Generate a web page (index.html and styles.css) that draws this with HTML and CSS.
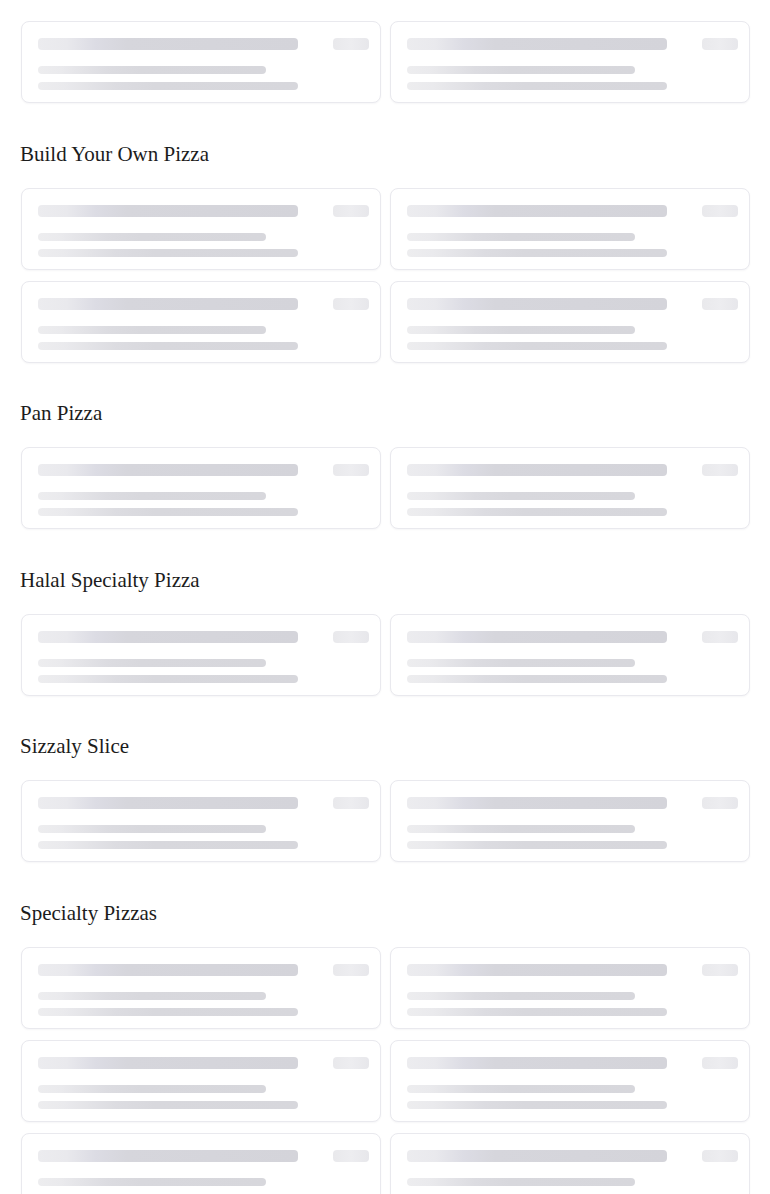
FILE: index.html
```html
<!DOCTYPE html>
<html lang="en">
<head>
<meta charset="utf-8">
<title>Menu</title>
<link rel="stylesheet" href="styles.css">
</head>
<body>
<main class="menu">
  <section class="section section-first">
    <div class="grid">
      <div class="card"><div class="col"><div class="bar title"></div><div class="bar line short"></div><div class="bar line"></div></div><div class="bar price"></div></div>
      <div class="card"><div class="col"><div class="bar title"></div><div class="bar line short"></div><div class="bar line"></div></div><div class="bar price"></div></div>
    </div>
  </section>

  <section class="section">
    <h2 class="heading">Build Your Own Pizza</h2>
    <div class="grid">
      <div class="card"><div class="col"><div class="bar title"></div><div class="bar line short"></div><div class="bar line"></div></div><div class="bar price"></div></div>
      <div class="card"><div class="col"><div class="bar title"></div><div class="bar line short"></div><div class="bar line"></div></div><div class="bar price"></div></div>
      <div class="card"><div class="col"><div class="bar title"></div><div class="bar line short"></div><div class="bar line"></div></div><div class="bar price"></div></div>
      <div class="card"><div class="col"><div class="bar title"></div><div class="bar line short"></div><div class="bar line"></div></div><div class="bar price"></div></div>
    </div>
  </section>

  <section class="section">
    <h2 class="heading">Pan Pizza</h2>
    <div class="grid">
      <div class="card"><div class="col"><div class="bar title"></div><div class="bar line short"></div><div class="bar line"></div></div><div class="bar price"></div></div>
      <div class="card"><div class="col"><div class="bar title"></div><div class="bar line short"></div><div class="bar line"></div></div><div class="bar price"></div></div>
    </div>
  </section>

  <section class="section">
    <h2 class="heading">Halal Specialty Pizza</h2>
    <div class="grid">
      <div class="card"><div class="col"><div class="bar title"></div><div class="bar line short"></div><div class="bar line"></div></div><div class="bar price"></div></div>
      <div class="card"><div class="col"><div class="bar title"></div><div class="bar line short"></div><div class="bar line"></div></div><div class="bar price"></div></div>
    </div>
  </section>

  <section class="section">
    <h2 class="heading">Sizzaly Slice</h2>
    <div class="grid">
      <div class="card"><div class="col"><div class="bar title"></div><div class="bar line short"></div><div class="bar line"></div></div><div class="bar price"></div></div>
      <div class="card"><div class="col"><div class="bar title"></div><div class="bar line short"></div><div class="bar line"></div></div><div class="bar price"></div></div>
    </div>
  </section>

  <section class="section">
    <h2 class="heading">Specialty Pizzas</h2>
    <div class="grid">
      <div class="card"><div class="col"><div class="bar title"></div><div class="bar line short"></div><div class="bar line"></div></div><div class="bar price"></div></div>
      <div class="card"><div class="col"><div class="bar title"></div><div class="bar line short"></div><div class="bar line"></div></div><div class="bar price"></div></div>
      <div class="card"><div class="col"><div class="bar title"></div><div class="bar line short"></div><div class="bar line"></div></div><div class="bar price"></div></div>
      <div class="card"><div class="col"><div class="bar title"></div><div class="bar line short"></div><div class="bar line"></div></div><div class="bar price"></div></div>
      <div class="card"><div class="col"><div class="bar title"></div><div class="bar line short"></div><div class="bar line"></div></div><div class="bar price"></div></div>
      <div class="card"><div class="col"><div class="bar title"></div><div class="bar line short"></div><div class="bar line"></div></div><div class="bar price"></div></div>
    </div>
  </section>
</main>
</body>
</html>
```
FILE: styles.css
```css
html, body {
  margin: 0;
  padding: 0;
  background: #ffffff;
}

body {
  font-family: "Liberation Serif", "Times New Roman", serif;
  color: #1f1f1f;
}

.menu {
  padding: 21px 20px 40px 21px;
}

.section {
  margin-top: 38.6px;
}

.section-first {
  margin-top: 0;
}

.heading {
  margin: 0 0 22px -1px;
  font-size: 21px;
  line-height: 24px;
  font-weight: 400;
  color: #1c1c1c;
}

.grid {
  display: grid;
  grid-template-columns: 1fr 1fr;
  column-gap: 9px;
  row-gap: 11px;
}

.card {
  display: flex;
  align-items: flex-start;
  justify-content: space-between;
  height: 82px;
  box-sizing: border-box;
  padding: 16px 11px 12px 16px;
  border: 1px solid #e9e9ee;
  border-radius: 8px;
  background: #ffffff;
  box-shadow: 0 1px 2px rgba(20, 20, 40, 0.04);
}

.col {
  display: flex;
  flex-direction: column;
  width: 260px;
}

.bar {
  border-radius: 4px;
}

.title {
  width: 260px;
  height: 12px;
  background: linear-gradient(90deg, #ececef 0%, #e9e9ed 11%, #dcdce4 22%, #d6d6dc 34%, #d4d4da 100%);
}

.line {
  width: 260px;
  height: 8px;
  margin-top: 8px;
  background: linear-gradient(90deg, #ededef 0%, #eaeaed 10%, #e3e3e7 20%, #dcdce1 30%, #d8d8dd 45%, #d7d7dc 100%);
}

.line.short {
  width: 228px;
  margin-top: 16px;
}

.price {
  width: 36px;
  height: 12px;
  flex-shrink: 0;
  background: linear-gradient(90deg, #e9e9ec 0%, #ededf0 50%, #e7e7eb 100%);
}
```
